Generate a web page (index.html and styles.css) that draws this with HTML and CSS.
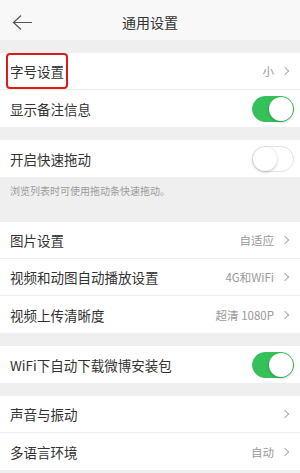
FILE: index.html
```html
<!DOCTYPE html>
<html lang="zh">
<head>
<meta charset="utf-8">
<link rel="stylesheet" href="styles.css">
</head>
<body>
<div class="page">
  <header class="topbar">
    <svg class="back" width="21" height="17" viewBox="0 0 21 17"><path d="M20 8.5H2M9 1.5L1.5 8.5L9 15.5" fill="none" stroke="#555" stroke-width="1.2"/></svg>
    <div class="title">通用设置</div>
  </header>

  <div class="gap"></div>
  <div class="group">
    <div class="row"><span class="label boxed">字号设置</span><span class="value">小<i class="chev"></i></span></div>
    <div class="row"><span class="label">显示备注信息</span><span class="toggle on"><b></b></span></div>
  </div>

  <div class="gap"></div>
  <div class="group">
    <div class="row"><span class="label">开启快速拖动</span><span class="toggle"><b></b></span></div>
  </div>
  <div class="note">浏览列表时可使用拖动条快速拖动。</div>

  <div class="group">
    <div class="row"><span class="label">图片设置</span><span class="value">自适应<i class="chev"></i></span></div>
    <div class="row"><span class="label">视频和动图自动播放设置</span><span class="value">4G和WiFi<i class="chev"></i></span></div>
    <div class="row"><span class="label">视频上传清晰度</span><span class="value">超清 1080P<i class="chev"></i></span></div>
  </div>

  <div class="gap"></div>
  <div class="group">
    <div class="row"><span class="label">WiFi下自动下载微博安装包</span><span class="toggle on"><b></b></span></div>
  </div>

  <div class="gap"></div>
  <div class="group">
    <div class="row"><span class="label">声音与振动</span><span class="value"><i class="chev"></i></span></div>
    <div class="row"><span class="label">多语言环境</span><span class="value">自动<i class="chev"></i></span></div>
  </div>
</div>
</body>
</html>
```
FILE: styles.css
```css
* { box-sizing: border-box; }
html, body { margin: 0; padding: 0; }
body {
  background: #efefef;
  font-family: "Noto Sans CJK SC", "Noto Sans", sans-serif;
  color: #333;
  width: 300px;
  height: 473px;
  overflow: hidden;
}
.topbar {
  height: 40px;
  background: #f8f8f8;
  display: flex;
  align-items: center;
  justify-content: center;
  position: relative;
}
.back { position: absolute; left: 12px; top: 14px; }
.title { font-size: 14px; color: #333; padding-top: 3px; }
.gap { height: 13px; }
.group { background: #fff; }
.row {
  height: 37px;
  display: flex;
  align-items: center;
  justify-content: space-between;
  padding: 0 8px 0 10px;
  border-bottom: 1px solid #ececec;
}
.group .row:last-child { border-bottom: none; }
.label { font-size: 13.5px; color: #333; line-height: 20px; }
.boxed {
  outline: 2px solid #e0191c;
  border-radius: 2px;
  padding: 6px 2px;
  margin-left: -2px;
}
.value {
  font-size: 11.5px;
  color: #9a9a9a;
  display: flex;
  align-items: center;
}
.chev {
  display: inline-block;
  width: 6px;
  height: 6px;
  border-top: 1px solid #aaa;
  border-right: 1px solid #aaa;
  transform: rotate(45deg);
  margin-left: 8px;
  margin-right: 4px;
}
.toggle {
  width: 42px;
  height: 26px;
  border-radius: 13px;
  background: #fff;
  border: 1px solid #e3e3e3;
  position: relative;
  margin-right: -2px;
}
.toggle b {
  position: absolute;
  left: 0;
  top: 0;
  width: 24px;
  height: 24px;
  border-radius: 50%;
  background: #fff;
  box-shadow: 0 1px 3px rgba(0,0,0,0.25);
}
.toggle.on { background: #35c159; border-color: #35c159; }
.toggle.on b { left: auto; right: 0; }
.note {
  height: 45px;
  padding: 6px 10px 0;
  font-size: 10px;
  color: #9b9b9b;
  background: #efefef;
}
```
